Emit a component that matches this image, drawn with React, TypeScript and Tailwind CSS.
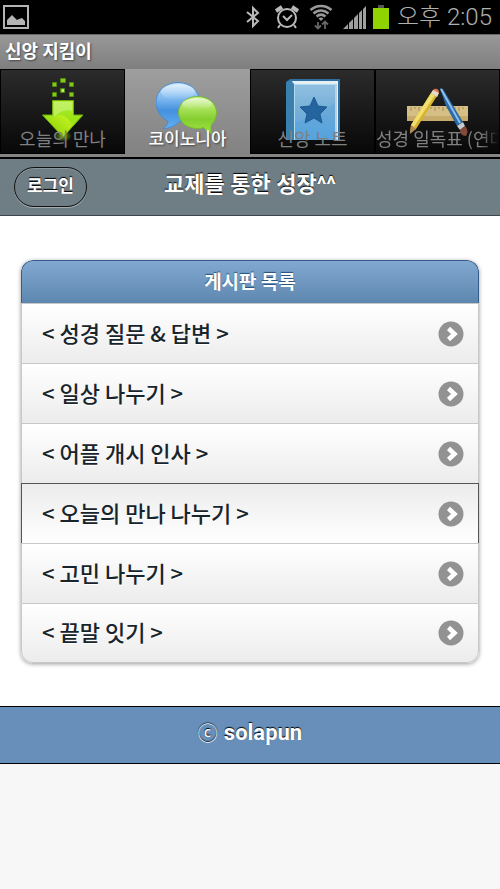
import React, { useState } from 'react'
import clsx from 'clsx'

const ImageIcon: React.FC = () => (
  <svg className="h-6 w-[26px]" viewBox="0 0 26 24" fill="none" aria-hidden="true">
    <rect x="1" y="1" width="24" height="22" stroke="#b4b4b4" strokeWidth="2" />
    <path d="M4 20v-5l5-5 5 5 2-1 3-1 3 3v4z" fill="#b4b4b4" />
  </svg>
)

const BluetoothIcon: React.FC = () => (
  <svg className="h-6 w-4" viewBox="0 0 16 24" fill="none" stroke="#b9b9b9" strokeWidth="2" aria-hidden="true">
    <path d="M2 7l11 9-5 5V3l5 5-11 9" />
  </svg>
)

const AlarmIcon: React.FC = () => (
  <svg className="h-6 w-6" viewBox="0 0 24 24" fill="none" stroke="#b9b9b9" strokeWidth="2" aria-hidden="true">
    <circle cx="12" cy="13" r="9" />
    <path d="M8 11l4 4 5-5M5 20l-2 3M19 20l2 3" />
    <path d="M1 6l6-4M23 6l-6-4" strokeWidth="4" />
  </svg>
)

const WifiIcon: React.FC = () => (
  <svg className="h-[26px] w-6" viewBox="0 0 24 26" fill="none" aria-hidden="true">
    <path d="M1.500 6c6-5.500 15-5.500 21 0M4.500 9.500c4.500-4 10.500-4 15 0M7.500 12.500c3-2.500 6-2.500 9 0" stroke="#999" strokeWidth="2.500" />
    <path d="M9.500 14.500c1.500-1.200 3.500-1.200 5 0L12 17z" fill="#999" />
    <path d="M9 18v6M6 21.500l3 3 3-3M16 25v-7M13 20.500l3-3 3 3" stroke="#666" strokeWidth="1.800" />
  </svg>
)

const SignalIcon: React.FC = () => (
  <svg className="h-[23px] w-6" viewBox="0 0 24 23" fill="#a0a0a0" aria-hidden="true">
    <path d="M0 23l5-5v5zM6 17l4-4v10H6zM11 12l4-4v15h-4zM16 7l3-3v19h-3zM20 3l3-3v23h-3z" />
  </svg>
)

const BatteryIcon: React.FC = () => (
  <svg className="h-6 w-4" viewBox="0 0 16 24" aria-hidden="true">
    <path d="M5 0h6v3H5z" fill="#555" />
    <path d="M0 3h16v21H0z" fill="#8fd300" />
  </svg>
)

const DownloadArt: React.FC = () => (
  <svg className="h-16 w-16" viewBox="0 0 64 64" aria-hidden="true">
    <defs>
      <linearGradient id="arrow" x1="0" y1="0" x2="0" y2="1">
        <stop offset="0" stopColor="#b4ee3a" />
        <stop offset="0.5" stopColor="#9ae414" />
        <stop offset="1" stopColor="#b8ec10" />
      </linearGradient>
      <linearGradient id="swirl" x1="0" y1="1" x2="1" y2="0">
        <stop offset="0" stopColor="#8cd200" />
        <stop offset="1" stopColor="#c8f428" />
      </linearGradient>
      <radialGradient id="glow">
        <stop offset="0" stopColor="#8ad400" stopOpacity="0.8" />
        <stop offset="1" stopColor="#8ad400" stopOpacity="0" />
      </radialGradient>
    </defs>
    <g fill="#84c81a" stroke="#4f8a0c">
      <path d="M29.500 .5h5v4h-5zM21.500 4.500h4v4h-4zM38.500 4.500h4v4h-4zM29.500 10.500h4v4h-4zM21.500 14.500h4v4h-4zM38.500 14.500h4v4h-4z" />
    </g>
    <path d="M31 11.500h2v2h-2z" fill="#d8f88a" />
    <ellipse cx="32" cy="58" rx="9" ry="6" fill="url(#glow)" />
    <path d="M21.500 22.500h21V37H52L32 59 11.500 37h10z" fill="url(#arrow)" stroke="#6fae0c" />
    <path d="M18 43c6-8 16-8 21 1 2 3 1 6-1 8l-6 6z" fill="url(#swirl)" />
    <path d="M23 24h18v9c-7-2-12 1-18 6z" fill="#d8f8a0" opacity="0.45" />
  </svg>
)

const ChatArt: React.FC = () => (
  <svg className="h-16 w-16" viewBox="0 0 64 64" aria-hidden="true">
    <defs>
      <linearGradient id="blue" x1="0" y1="0" x2="0" y2="1">
        <stop offset="0" stopColor="#b9dcfa" />
        <stop offset="0.35" stopColor="#7db8ef" />
        <stop offset="0.6" stopColor="#4590de" />
        <stop offset="1" stopColor="#62b0f2" />
      </linearGradient>
      <linearGradient id="green" x1="0" y1="0" x2="0" y2="1">
        <stop offset="0" stopColor="#c9f28e" />
        <stop offset="0.35" stopColor="#a4e054" />
        <stop offset="0.6" stopColor="#84ce30" />
        <stop offset="1" stopColor="#a2e640" />
      </linearGradient>
      <linearGradient id="shine" x1="0" y1="0" x2="0" y2="1">
        <stop offset="0" stopColor="#fff" stopOpacity="0.6" />
        <stop offset="1" stopColor="#fff" stopOpacity="0" />
      </linearGradient>
    </defs>
    <path d="M22 4.500c12 0 21.500 8 21.500 19S35 43 23 44c-4 4-9 6-16 7 3-3 5-5 5-8C4 39 0 32 0 24 0 13 10 4.500 22 4.500z" fill="url(#blue)" stroke="#4b8ccc" />
    <ellipse cx="22" cy="14" rx="17" ry="8" fill="url(#shine)" />
    <path d="M41.500 18.500c-11 0-19 7-19 16s8 16 19 16c2 0 4 0 6-1 3 3 5 5 9 7-2-4-2-7-1-10 3-3 5-7 5-12 0-9-8-16-19-16z" fill="url(#green)" stroke="#78b838" />
    <ellipse cx="41" cy="26" rx="15" ry="6" fill="url(#shine)" />
  </svg>
)

const BookArt: React.FC = () => (
  <svg className="h-16 w-16" viewBox="0 0 64 64" aria-hidden="true">
    <defs>
      <linearGradient id="cover" x1="0" y1="0" x2="0" y2="1">
        <stop offset="0" stopColor="#90c0e0" />
        <stop offset="0.5" stopColor="#74aed8" />
        <stop offset="1" stopColor="#5aa6e0" />
      </linearGradient>
    </defs>
    <path d="M5 4l4-3h50v61H5z" fill="#2f6f9f" />
    <path d="M9 3h48v59h-3V6H12z" fill="#e4f0f6" />
    <path d="M55 6v56" stroke="#8bb4d0" />
    <path d="M5 4l5-2 3 4v56H5z" fill="#3a80ae" />
    <path d="M13 6h41v56H13z" fill="url(#cover)" />
    <path d="M13.500 62V6.500H54" fill="none" stroke="#b4daf0" />
    <path d="M14 44c15-5 28-9 40-20v38H14z" fill="#3d97dc" opacity="0.2" />
    <path d="M33 19l4 9 9 1-7 7 2 9-8-5-9 5 2-9-7-7 10-1z" fill="#2465a0" stroke="#1f5a92" />
  </svg>
)

const ToolsArt: React.FC = () => (
  <svg className="h-16 w-16" viewBox="0 0 64 64" aria-hidden="true">
    <path d="M1 28h61v15H1z" fill="#d6bf84" />
    <path d="M1 38h61v5H1z" fill="#c6ab6a" />
    <path d="M5 29v4M9 29v2M13 29v4M17 29v2M21 29v4M25 29v2M29 29v4M33 29v2M37 29v4M41 29v2M45 29v4M49 29v2M53 29v4M57 29v2" stroke="#a08a54" />
    <path d="M25 15l6 3L10 51l-6 4 1-8z" fill="#d8b32c" />
    <path d="M25 15l4 2L8 49l-3-2z" fill="#f2de6c" />
    <path d="M25 15l3-4c2-1 5 0 5 3l-2 5z" fill="#e0764c" />
    <path d="M25 15l2-3 6 3-2 4z" fill="#e4dccb" />
    <path d="M5 47l5 4-6 5z" fill="#b08a58" />
    <path d="M34 10l3 1 20 33-6 4-11-20z" fill="#2b69a8" />
    <path d="M35 11l19 34" stroke="#8cc0ea" strokeWidth="2" />
    <path d="M51 48l6-4 2 4-5 4z" fill="#c8ccd0" />
    <path d="M54 52l5-4c3 3 3 7 1 10-4 0-6-3-6-6z" fill="#85493a" />
  </svg>
)

const tabs = [
  { name: '오늘의 만나', art: <DownloadArt /> },
  { name: '코이노니아', art: <ChatArt /> },
  { name: '신앙 노트', art: <BookArt /> },
  { name: '성경 일독표 (연대', art: <ToolsArt /> },
]

const boards = [
  '성경 질문 & 답변',
  '일상 나누기',
  '어플 개시 인사',
  '오늘의 만나 나누기',
  '고민 나누기',
  '끝말 잇기',
]

const StatusBar: React.FC = () => (
  <div className="flex h-[34px] items-center justify-between bg-black pl-[3px] pr-2 text-[#b0b0b0]">
    <ImageIcon />
    <div className="flex items-center">
      <div className="flex items-center gap-[10px]">
        <div className="mr-1"><BluetoothIcon /></div>
        <AlarmIcon />
        <WifiIcon />
        <SignalIcon />
      </div>
      <div className="ml-[6px]"><BatteryIcon /></div>
      <span className="ml-2 font-[Roboto,'Noto_Sans_CJK_KR',sans-serif] text-2xl leading-8 font-light">오후 2:05</span>
    </div>
  </div>
)

export default function App() {
  const [activeTab, setActiveTab] = useState(1)
  const [activeBoard, setActiveBoard] = useState(3)

  return (
    <div className="min-h-screen bg-[#f7f7f7] font-['Noto_Sans_CJK_KR',sans-serif]">
      <StatusBar />

      <div className="flex h-[35px] items-center border-t border-[#666] bg-linear-to-b from-[#999] to-[#7e7e7e] px-[5px] pb-1">
        <h1 className="text-lg leading-6 font-bold text-white text-shadow-[1px_1px_2px_#444]">신앙 지킴이</h1>
      </div>

      <nav className="grid grid-cols-4 border-b-3 border-[#848484] bg-[#848484]">
        {tabs.map((tab, index) => (
          <button
            key={tab.name}
            type="button"
            onClick={() => setActiveTab(index)}
            className={clsx(
              'relative flex h-[85px] justify-center pt-[9px]',
              index === activeTab
                ? 'bg-linear-to-b from-[#9e9e9e] to-[#828282] text-white'
                : 'bg-linear-to-b from-[#2c2c2c] to-[#080808] text-[#808080] inset-ring inset-ring-black'
            )}
          >
            {tab.art}
            <span
              className={clsx(
                'absolute inset-x-px bottom-1 leading-6 whitespace-nowrap',
                index === activeTab ? 'text-[17px] font-medium text-shadow-[1px_1px_2px_#444]' : 'text-lg',
                index === 3 ? 'text-left mask-r-from-85%' : 'text-center'
              )}
            >
              {tab.name}
            </span>
          </button>
        ))}
      </nav>

      <header className="grid h-[59px] grid-cols-[1fr_auto_1fr] items-center border-t-2 border-b border-t-black border-b-[#3d464b] bg-[#6f7d85] px-[14px] text-white">
        <button
          type="button"
          className="h-10 w-[73px] rounded-full border border-[#111] pb-1 text-[17px] font-bold shadow-[0_1px_0_#a5adb1,inset_0_1px_0_#89959b] text-shadow-[0_-1px_1px_#000]"
        >
          로그인
        </button>
        <h2 className="pb-1 font-[Roboto,'Noto_Sans_CJK_KR',sans-serif] text-[22px] leading-8 font-bold text-shadow-[0_-1px_1px_#000]">
          교제를 통한 성장^^
        </h2>
      </header>

      <main className="bg-white px-[21px] pt-11 pb-[43px]">
        <section className="overflow-hidden rounded-xl shadow-[0_1px_4px_#999]">
          <h3 className="h-[43px] rounded-t-xl border border-b-0 border-[#375c8c] bg-linear-to-b from-[#81a8d0] to-[#5e87b0] text-center text-[19px] leading-10 font-bold text-white text-shadow-[0_-1px_1px_#254f7a]">
            게시판 목록
          </h3>
          <ul>
            {boards.map((board, index) => (
              <li key={board}>
                <a
                  href="#"
                  onClick={(e) => {
                    e.preventDefault()
                    setActiveBoard(index)
                  }}
                  className={clsx(
                    'flex h-[60px] items-center justify-between border-x border-t pr-[14px] pl-5 text-[22px] leading-8 font-medium text-[#18242b] text-shadow-[0_1px_0_#fff]',
                    index === activeBoard
                      ? 'border-[#555] bg-linear-to-b from-[#ececec] to-white'
                      : 'border-[#c8c8c8] bg-linear-to-b from-white to-[#ececec]',
                    index === boards.length - 1 && 'rounded-b-xl border-b'
                  )}
                >
                  <span className="pb-1">&lt; {board} &gt;</span>
                  <svg className="h-[26px] w-[26px]" viewBox="0 0 26 26" fill="none" aria-hidden="true">
                    <circle cx="13" cy="13" r="12.500" fill="#929292" />
                    <path d="M10.500 7.500l6 5.500-6 5.500" stroke="#fff" strokeWidth="4.500" />
                  </svg>
                </a>
              </li>
            ))}
          </ul>
        </section>
      </main>

      <footer className="flex h-[58px] items-center justify-center gap-[6px] border-y border-black bg-[#678fb9] pb-1 text-white text-shadow-[0_-1px_1px_#000]">
        <span className="text-xl leading-8">ⓒ</span>
        <span className="font-[Roboto,sans-serif] text-[22px] leading-8 font-bold">solapun</span>
      </footer>
    </div>
  )
}
